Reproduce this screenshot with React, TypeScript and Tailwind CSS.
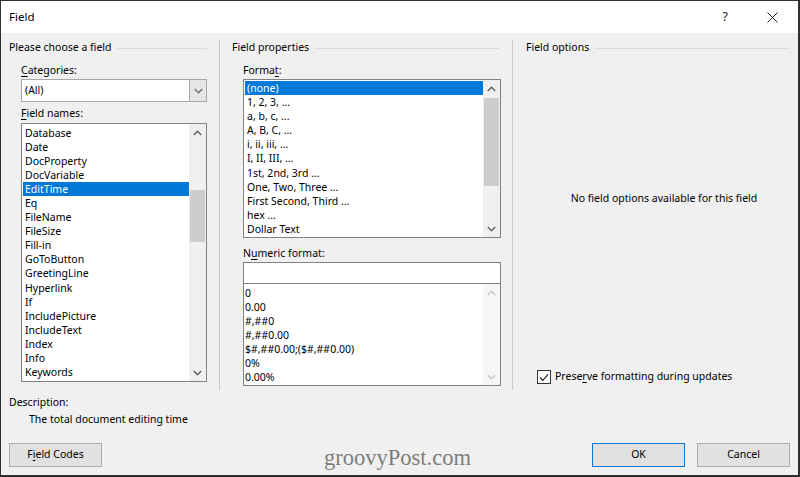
import React from "react";

const Up = ({ c = "#606060" }: { c?: string }) => (
  <svg width="9" height="6" viewBox="0 0 9 6">
    <polyline points="0.8,5 4.5,1.3 8.2,5" fill="none" stroke={c} strokeWidth="1.4" />
  </svg>
);
const Down = ({ c = "#606060" }: { c?: string }) => (
  <svg width="9" height="6" viewBox="0 0 9 6">
    <polyline points="0.8,1 4.5,4.7 8.2,1" fill="none" stroke={c} strokeWidth="1.4" />
  </svg>
);

function ScrollBar({ offset, thumb, disabled }: { offset: number; thumb: number; disabled?: boolean }) {
  const c = disabled ? "#c8c8c8" : "#606060";
  return (
    <div className={`w-[17px] h-full flex flex-col ${disabled ? "bg-[#f6f6f6]" : "bg-[#f0f0f0]"}`}>
      <div className="h-[17px] flex items-center justify-center shrink-0">
        <Up c={c} />
      </div>
      <div className="flex-1 flex flex-col px-px">
        {thumb > 0 && <div style={{ marginTop: offset, height: thumb }} className="bg-[#cdcdcd] w-full" />}
      </div>
      <div className="h-[17px] flex items-center justify-center shrink-0">
        <Down c={c} />
      </div>
    </div>
  );
}

function GroupHeader({ text }: { text: string }) {
  return (
    <div className="h-[16px] flex items-center">
      <span className="whitespace-nowrap">{text}</span>
      <div className="flex-1 h-px bg-[#dcdcdc] ml-[5px]" />
    </div>
  );
}

const fieldNames = [
  "Database",
  "Date",
  "DocProperty",
  "DocVariable",
  "EditTime",
  "Eq",
  "FileName",
  "FileSize",
  "Fill-in",
  "GoToButton",
  "GreetingLine",
  "Hyperlink",
  "If",
  "IncludePicture",
  "IncludeText",
  "Index",
  "Info",
  "Keywords",
];

const formats = [
  "(none)",
  "1, 2, 3, ...",
  "a, b, c, ...",
  "A, B, C, ...",
  "i, ii, iii, ...",
  "I, II, III, ...",
  "1st, 2nd, 3rd ...",
  "One, Two, Three ...",
  "First Second, Third ...",
  "hex ...",
  "Dollar Text",
];

const numerics = ["0", "0.00", "#,##0", "#,##0.00", "$#,##0.00;($#,##0.00)", "0%", "0.00%"];

function Item({ text, selected }: { text: string; selected?: boolean }) {
  return (
    <div
      className={`h-[14.1px] leading-[14.1px] ml-px pl-[2px] whitespace-nowrap ${
        selected ? "bg-[#0078d7] text-white" : ""
      }`}
    >
      {text}
    </div>
  );
}

export default function App() {
  return (
    <div className="w-[800px] h-[477px] bg-[#f0f0f0] border-[#2f2f2f] border-l border-t border-r-2 border-b-2 flex flex-col overflow-hidden text-[10.5px] text-black font-['Noto_Sans','Open_Sans',sans-serif]">
      {/* Title bar */}
      <div className="h-[32px] shrink-0 bg-white flex items-center pl-[8px]">
        <span className="text-[11.5px]">Field</span>
        <span className="ml-auto text-[12.5px] mr-[39px] text-[#222]">?</span>
        <svg width="11" height="11" viewBox="0 0 11 11" className="mr-[20px]">
          <path d="M0.5 0.5 L10.5 10.5 M10.5 0.5 L0.5 10.5" stroke="#222" strokeWidth="1" />
        </svg>
      </div>

      {/* Body */}
      <div className="h-[357px] shrink-0 flex pt-[7px]">
        {/* Left column */}
        <div className="w-[198px] ml-[8px] flex flex-col">
          <GroupHeader text="Please choose a field" />
          <div className="pl-[12px] mt-[6px] h-[16px] leading-[16px]">
            <span className="underline underline-offset-2">C</span>ategories:
          </div>
          <div className="ml-[12px] mt-px w-[186px] h-[23px] bg-white border border-[#a8a8a8] flex">
            <div className="flex-1 pl-[3px] flex items-center">(All)</div>
            <div className="w-[17px] bg-[#e5e5e5] border-l border-[#a8a8a8] flex items-center justify-center">
              <Down c="#707070" />
            </div>
          </div>
          <div className="pl-[12px] mt-[3px] h-[16px] leading-[16px]">
            <span className="underline underline-offset-2">F</span>ield names:
          </div>
          <div className="ml-[12px] mt-[2px] w-[186px] h-[259px] bg-white border border-[#828282] flex">
            <div className="flex-1 pt-[1.5px] overflow-hidden">
              {fieldNames.map((n) => (
                <Item key={n} text={n} selected={n === "EditTime"} />
              ))}
            </div>
            <ScrollBar offset={49} thumb={52} />
          </div>
        </div>

        {/* Separator */}
        <div className="ml-[12px] w-px h-[350px] bg-[#cacaca]" />

        {/* Middle column */}
        <div className="w-[268px] ml-[12px] flex flex-col">
          <GroupHeader text="Field properties" />
          <div className="pl-[11px] mt-[6px] h-[16px] leading-[16px]">
            Forma<span className="underline underline-offset-2">t</span>:
          </div>
          <div className="ml-[11px] mt-px w-[258px] h-[159px] bg-white border border-[#828282] flex">
            <div className="flex-1 pt-px overflow-hidden">
              {formats.map((n, i) => (
                <Item key={n} text={n} selected={i === 0} />
              ))}
            </div>
            <ScrollBar offset={1} thumb={88} />
          </div>
          <div className="pl-[11px] mt-[7px] h-[16px] leading-[16px]">
            N<span className="underline underline-offset-2">u</span>meric format:
          </div>
          <div className="ml-[11px] mt-px w-[258px] h-[22px] bg-white border border-[#828282]" />
          <div className="ml-[11px] w-[258px] h-[102px] bg-white border border-t-0 border-[#828282] flex">
            <div className="flex-1 pt-[1.5px] overflow-hidden">
              {numerics.map((n) => (
                <div key={n} className="h-[14.1px] leading-[14.1px] pl-[1px] whitespace-nowrap">
                  {n}
                </div>
              ))}
            </div>
            <ScrollBar offset={0} thumb={0} disabled />
          </div>
        </div>

        {/* Separator */}
        <div className="ml-[12px] w-px h-[350px] bg-[#cacaca]" />

        {/* Right column */}
        <div className="w-[264px] ml-[13px] flex flex-col">
          <GroupHeader text="Field options" />
          <div className="mt-[134px] h-[16px] leading-[16px] text-center pl-[12px]">
            No field options available for this field
          </div>
          <div className="mt-[163px] pl-[11px] flex items-center h-[16px]">
            <div className="w-[14px] h-[14px] bg-white border border-[#333] flex items-center justify-center">
              <svg width="10" height="9" viewBox="0 0 10 9">
                <polyline points="1,4.5 3.8,7.3 9,1.3" fill="none" stroke="#222" strokeWidth="1.2" />
              </svg>
            </div>
            <span className="ml-[4px]">
              Prese<span className="underline underline-offset-2">r</span>ve formatting during updates
            </span>
          </div>
        </div>
      </div>

      {/* Description */}
      <div className="mt-[4px] pl-[8px] h-[16px] leading-[16px]">Description:</div>
      <div className="mt-px pl-[28px] h-[16px] leading-[16px]">The total document editing time</div>

      {/* Buttons */}
      <div className="mt-[16px] h-[24px] flex items-center pl-[8px] pr-[8px]">
        <div className="w-[93px] h-[24px] bg-[#e1e1e1] border border-[#adadad] flex items-center justify-center">
          <span>
            F<span className="underline underline-offset-2">i</span>eld Codes
          </span>
        </div>
        <div className="ml-[222px] mt-[6px] text-[22.5px] leading-[24px] text-[#7d7d7d] font-['Liberation_Serif',serif]">
          groovyPost.com
        </div>
        <div className="ml-auto w-[93px] h-[24px] bg-[#e1e1e1] border border-[#0078d7] flex items-center justify-center">
          OK
        </div>
        <div className="ml-[12px] w-[93px] h-[24px] bg-[#e1e1e1] border border-[#adadad] flex items-center justify-center">
          Cancel
        </div>
      </div>
    </div>
  );
}
